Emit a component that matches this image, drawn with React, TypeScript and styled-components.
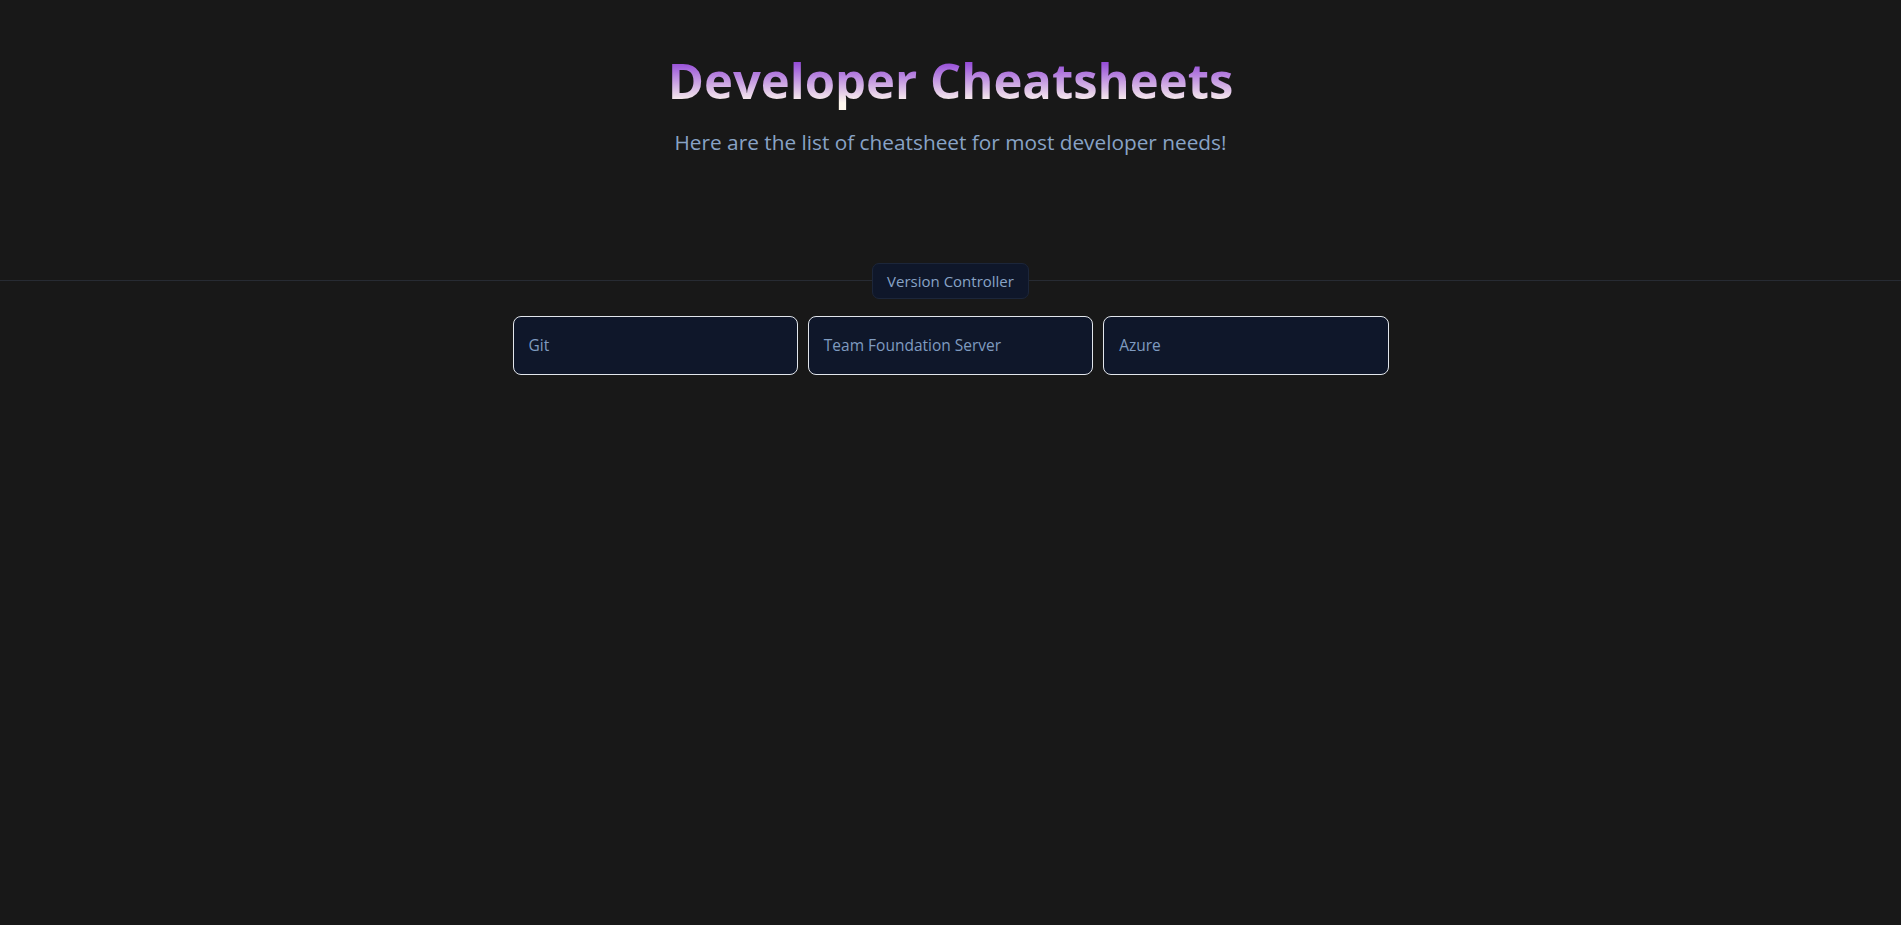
import React from 'react'
import styled, { createGlobalStyle } from 'styled-components'

const GlobalStyle = createGlobalStyle`
  html, body {
    margin: 0;
    padding: 0;
    background: #181818;
    font-family: 'Open Sans', 'Noto Sans', sans-serif;
  }
`

const Page = styled.div`
  min-height: 100vh;
  background: #181818;
`

const Header = styled.header`
  display: flex;
  flex-direction: column;
  align-items: center;
  padding-top: 51px;
`

const Title = styled.h1`
  margin: 0;
  font-size: 49px;
  font-weight: 700;
  line-height: 1.2;
  background: linear-gradient(180deg, #8a3ad6 12%, #fff8ee 88%);
  -webkit-background-clip: text;
  background-clip: text;
  color: transparent;
`

const Subtitle = styled.p`
  margin: 18px 0 0;
  font-size: 20.8px;
  color: #88a3c6;
`

const Section = styled.section`
  margin-top: 107px;
`

const Divider = styled.div`
  display: flex;
  align-items: center;
`

const Line = styled.div`
  flex: 1;
  height: 1px;
  background: #272b33;
`

const Badge = styled.span`
  padding: 0 14px;
  height: 34px;
  display: flex;
  align-items: center;
  border: 1px solid #1c263a;
  border-radius: 7px;
  background: #0f172a;
  color: #88a3c6;
  font-size: 15px;
`

const Grid = styled.div`
  width: 876px;
  margin: 17px auto 0;
  display: grid;
  grid-template-columns: repeat(3, 1fr);
  gap: 10px;
`

const Card = styled.a`
  height: 59px;
  box-sizing: border-box;
  display: flex;
  align-items: center;
  padding: 0 15px;
  border: 1px solid #e2e6ec;
  border-radius: 8px;
  background: #0f172a;
  color: #7f9bc0;
  font-size: 15.5px;
  text-decoration: none;
  cursor: pointer;
`

const sheets = ['Git', 'Team Foundation Server', 'Azure']

export default function App() {
  return (
    <Page>
      <GlobalStyle />
      <Header>
        <Title>Developer Cheatsheets</Title>
        <Subtitle>Here are the list of cheatsheet for most developer needs!</Subtitle>
      </Header>
      <Section>
        <Divider>
          <Line />
          <Badge>Version Controller</Badge>
          <Line />
        </Divider>
        <Grid>
          {sheets.map((name) => (
            <Card key={name}>{name}</Card>
          ))}
        </Grid>
      </Section>
    </Page>
  )
}
